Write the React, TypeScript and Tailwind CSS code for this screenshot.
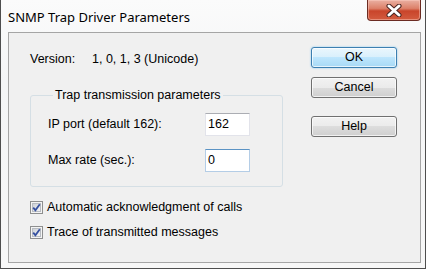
import type { ReactNode } from 'react';

function CloseButton() {
    return (
        <div className="ml-auto mr-[4px] w-[54px] h-[21px] rounded-b-[4px] border border-t-0 border-[#6b2b22] bg-[linear-gradient(to_bottom,#eab0a2_0%,#dc8069_42%,#c9452b_55%,#d35b3f_100%)] flex items-center justify-center shadow-[inset_0_0_0_1px_rgba(255,210,200,0.45)]">
            <svg width="16" height="13" viewBox="0 0 16 13">
                <path d="M3 2 L13 11 M13 2 L3 11" stroke="#4a2420" strokeWidth="5" strokeLinecap="round" />
                <path d="M3 2 L13 11 M13 2 L3 11" stroke="#ffffff" strokeWidth="3" strokeLinecap="round" />
            </svg>
        </div>
    );
}

function WinButton({ children, isDefault }: { children: ReactNode; isDefault?: boolean }) {
    return (
        <button
            type="button"
            className={`w-[86px] h-[21px] rounded-[3px] border text-[12.5px] leading-[15px] text-black flex items-center justify-center ${
                isDefault
                    ? 'border-[#3c7fb1] bg-[linear-gradient(to_bottom,#eaf6fd_0%,#d9f0fc_50%,#bee6fd_50%,#a7d9f5_100%)] shadow-[inset_0_0_0_1px_rgba(255,255,255,0.7),0_0_2px_#7dc4ef]'
                    : 'border-[#707070] bg-[linear-gradient(to_bottom,#f2f2f2_0%,#ebebeb_50%,#dddddd_50%,#cfcfcf_100%)] shadow-[inset_0_0_0_1px_rgba(255,255,255,0.7)]'
            }`}
        >
            {children}
        </button>
    );
}

function CheckBox() {
    return (
        <svg width="13" height="13" viewBox="0 0 13 13" className="shrink-0">
            <defs>
                <linearGradient id="cbfill" x1="0" y1="0" x2="1" y2="1">
                    <stop offset="0" stopColor="#cbcfd5" />
                    <stop offset="1" stopColor="#f7f7f7" />
                </linearGradient>
            </defs>
            <rect x="0.5" y="0.5" width="12" height="12" fill="#f4f4f4" stroke="#8e8f8f" />
            <rect x="2.5" y="2.5" width="8" height="8" fill="url(#cbfill)" stroke="#b8bcc2" strokeWidth="1" />
            <path d="M3.2 6.6 L5.4 9.2 L9.8 3.2" fill="none" stroke="#3550a0" strokeWidth="1.8" />
        </svg>
    );
}

function Field({ label, value, focused }: { label: string; value: string; focused?: boolean }) {
    return (
        <div className="flex items-center h-[23px]">
            <span className="w-[157px]">{label}</span>
            <div
                className={`w-[45px] h-[23px] bg-white border flex items-center pl-[2px] ${
                    focused
                        ? 'border-[#b4cde6] border-t-[#5b93c4]'
                        : 'border-[#e2e3ea] border-t-[#abadb3]'
                }`}
            >
                {value}
            </div>
        </div>
    );
}

export default function App() {
    return (
        <div className="w-[429px] h-[270px] bg-white font-['Liberation_Sans',Arial,sans-serif] text-[12.5px] leading-[15px] text-black">
            <div className="w-[426px] h-[269px] border-x border-b border-[#4e4e4e] bg-[linear-gradient(to_bottom,#fbfbfb_0%,#f4f5f6_30%,#f7f7f7_100%)] flex flex-col">
                <div className="h-[32px] flex items-start">
                    <span className="ml-[7px] mt-[9px] font-['Noto_Sans',sans-serif] text-[13px] leading-[16px]">
                        SNMP Trap Driver Parameters
                    </span>
                    <CloseButton />
                </div>
                <div className="ml-[7px] w-[413px] h-[231px] border border-[#a5a5a5] bg-[#f0f0f0] flex">
                    <div className="pl-[21px] pt-[19px] flex flex-col">
                        <div className="flex">
                            <span className="w-[62px]">Version:</span>
                            <span>1, 0, 1, 3 (Unicode)</span>
                        </div>
                        <fieldset className="mt-[21px] w-[253px] border border-[#d5dfe5] rounded-[3px] pl-[17px] pb-[14px]">
                            <legend className="ml-[5px] px-[2px]">Trap transmission parameters</legend>
                            <div className="mt-[10px] flex flex-col gap-[13px]">
                                <Field label="IP port (default 162):" value="162" />
                                <Field label="Max rate (sec.):" value="0" focused />
                            </div>
                        </fieldset>
                        <div className="mt-[13px] flex flex-col gap-[10px]">
                            <div className="flex items-center gap-[4px] h-[15px]">
                                <CheckBox />
                                <span>Automatic acknowledgment of calls</span>
                            </div>
                            <div className="flex items-center gap-[4px] h-[15px]">
                                <CheckBox />
                                <span>Trace of transmitted messages</span>
                            </div>
                        </div>
                    </div>
                    <div className="ml-auto mr-[23px] pt-[14px] flex flex-col">
                        <WinButton isDefault>OK</WinButton>
                        <div className="mt-[9px]">
                            <WinButton>Cancel</WinButton>
                        </div>
                        <div className="mt-[18px]">
                            <WinButton>Help</WinButton>
                        </div>
                    </div>
                </div>
            </div>
        </div>
    );
}
